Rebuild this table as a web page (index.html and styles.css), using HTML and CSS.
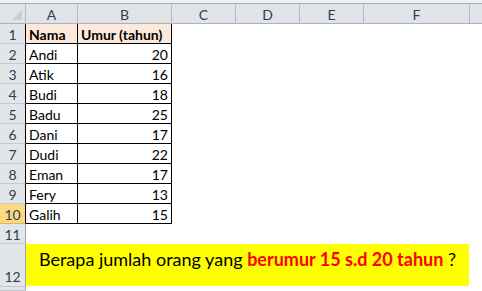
FILE: index.html
```html
<!DOCTYPE html>
<html>
<head>
<meta charset="utf-8">
<link rel="stylesheet" href="styles.css">
</head>
<body>
<div class="sheet">
  <div class="topband"></div>
  <div class="grid">
    <div class="corner"><span class="tri"></span></div>
    <div class="ch">A</div>
    <div class="ch">B</div>
    <div class="ch">C</div>
    <div class="ch">D</div>
    <div class="ch">E</div>
    <div class="ch">F</div>
    <div class="ch last"></div>

    <div class="rh tb">1</div>
    <div class="c t peach bold">Nama</div>
    <div class="c t peach bold">Umur (tahun)</div>
    <div class="c span"></div>

    <div class="rh tb">2</div>
    <div class="c t">Andi</div>
    <div class="c t num">20</div>
    <div class="c span"></div>

    <div class="rh tb">3</div>
    <div class="c t">Atik</div>
    <div class="c t num">16</div>
    <div class="c span"></div>

    <div class="rh tb">4</div>
    <div class="c t">Budi</div>
    <div class="c t num">18</div>
    <div class="c span"></div>

    <div class="rh tb">5</div>
    <div class="c t">Badu</div>
    <div class="c t num">25</div>
    <div class="c span"></div>

    <div class="rh tb">6</div>
    <div class="c t">Dani</div>
    <div class="c t num">17</div>
    <div class="c span"></div>

    <div class="rh tb">7</div>
    <div class="c t">Dudi</div>
    <div class="c t num">22</div>
    <div class="c span"></div>

    <div class="rh tb">8</div>
    <div class="c t">Eman</div>
    <div class="c t num">17</div>
    <div class="c span"></div>

    <div class="rh tb">9</div>
    <div class="c t">Fery</div>
    <div class="c t num">13</div>
    <div class="c span"></div>

    <div class="rh tb sel">10</div>
    <div class="c t">Galih</div>
    <div class="c t num">15</div>
    <div class="c span"></div>

    <div class="rh">11</div>
    <div class="c full"></div>

    <div class="rh tall">12</div>
    <div class="c question"><span>Berapa jumlah orang yang <b class="red">berumur 15 s.d 20 tahun</b> ?</span></div>
    <div class="c"></div>

    <div class="rh"></div>
    <div class="c full"></div>
  </div>
</div>
</body>
</html>
```

FILE: styles.css
```css
* { box-sizing: border-box; }
html, body { margin: 0; padding: 0; background: #fff; }
body { width: 482px; height: 291px; overflow: hidden; font-family: Lato, "Liberation Sans", sans-serif; font-size: 14px; color: #000; }

.sheet { display: flex; flex-direction: column; }
.topband { height: 4px; background: #eef0f3; border-bottom: 1px solid #a9b0b8; }

.grid {
  display: grid;
  grid-template-columns: 26px 52px 94px 64px 64px 64px 106px 1fr;
  grid-template-rows: 20px repeat(11, 20px) 43px 4px;
}

.corner { background: #e0e4e9; border-right: 1px solid #b4bac1; border-bottom: 1px solid #a9b0b8; position: relative; }
.tri { position: absolute; right: 3px; bottom: 3px; width: 0; height: 0; border-left: 10px solid transparent; border-bottom: 10px solid #c9ced4; }

.ch { background: #e0e4e9; border-right: 1px solid #b4bac1; border-bottom: 1px solid #a9b0b8; display: flex; align-items: center; justify-content: center; color: #2d3e50; font-size: 14px; padding-top: 1px; }
.ch.last { border-right: none; }

.rh { background: #e2e6eb; border-right: 1px solid #9ea6b0; border-bottom: 1px solid #c3c8ce; display: flex; align-items: center; justify-content: center; color: #2d3e50; font-size: 14px; padding-top: 1px; }
.rh.tb { border-right-color: #000; }
.rh.sel { background: #fbd983; border-bottom-color: #e7b55a; }
.rh.tall { align-items: flex-end; padding-bottom: 1px; }

.c { background: #fff; display: flex; align-items: center; padding: 1px 3px 0 3px; white-space: nowrap; }
.c.t { border-right: 1px solid #000; border-bottom: 1px solid #000; }
.c.peach { background: #fde9d9; }
.bold { font-weight: bold; }
.num { justify-content: flex-end; }
.span { grid-column: 4 / 9; }
.full { grid-column: 2 / 9; }

.question { grid-column: 2 / 8; background: #ffff00; border-right: 1px solid #fff; border-bottom: 1px solid #fff; justify-content: center; align-items: flex-start; padding-top: 4px; font-size: 18px; }
.red { color: #ff0000; }
```
